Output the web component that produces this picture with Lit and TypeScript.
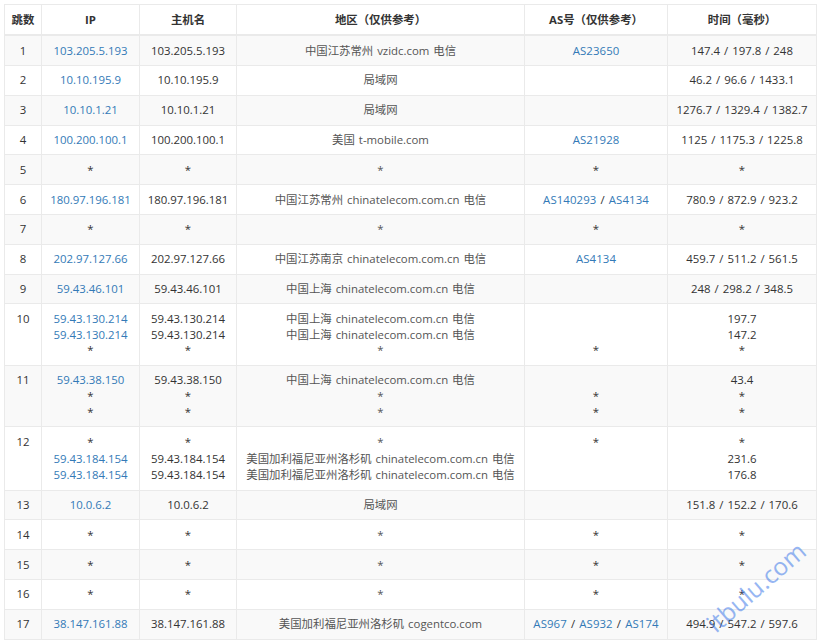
import { LitElement, html, css, nothing } from 'lit';
import { customElement } from 'lit/decorators.js';

// each cell is a list of lines, one hop can have several probes
type Hop = { n: number; ip: string[]; host: string[]; area: string[]; as: string[][]; time: string[]; tall?: boolean };

const one = (n: number, ip: string, area: string, as: string[], time: string): Hop => ({
  n,
  ip: [ip],
  host: [ip],
  area: [area],
  as: [as],
  time: [time],
});

const CT = '中国上海 chinatelecom.com.cn 电信';
const LA = '美国加利福尼亚州洛杉矶 chinatelecom.com.cn 电信';

const hops: Hop[] = [
  one(1, '103.205.5.193', '中国江苏常州 vzidc.com 电信', ['AS23650'], '147.4 / 197.8 / 248'),
  one(2, '10.10.195.9', '局域网', [], '46.2 / 96.6 / 1433.1'),
  one(3, '10.10.1.21', '局域网', [], '1276.7 / 1329.4 / 1382.7'),
  one(4, '100.200.100.1', '美国 t-mobile.com', ['AS21928'], '1125 / 1175.3 / 1225.8'),
  one(5, '*', '*', ['*'], '*'),
  one(6, '180.97.196.181', '中国江苏常州 chinatelecom.com.cn 电信', ['AS140293', 'AS4134'], '780.9 / 872.9 / 923.2'),
  one(7, '*', '*', ['*'], '*'),
  one(8, '202.97.127.66', '中国江苏南京 chinatelecom.com.cn 电信', ['AS4134'], '459.7 / 511.2 / 561.5'),
  one(9, '59.43.46.101', CT, [], '248 / 298.2 / 348.5'),
  {
    n: 10,
    ip: ['59.43.130.214', '59.43.130.214', '*'],
    host: ['59.43.130.214', '59.43.130.214', '*'],
    area: [CT, CT, '*'],
    as: [[], [], ['*']],
    time: ['197.7', '147.2', '*'],
  },
  {
    n: 11,
    ip: ['59.43.38.150', '*', '*'],
    host: ['59.43.38.150', '*', '*'],
    area: [CT, '*', '*'],
    as: [[], ['*'], ['*']],
    time: ['43.4', '*', '*'],
  },
  {
    n: 12,
    ip: ['*', '59.43.184.154', '59.43.184.154'],
    host: ['*', '59.43.184.154', '59.43.184.154'],
    area: ['*', LA, LA],
    as: [['*'], [], []],
    time: ['*', '231.6', '176.8'],
    tall: true,
  },
  one(13, '10.0.6.2', '局域网', [], '151.8 / 152.2 / 170.6'),
  one(14, '*', '*', ['*'], '*'),
  one(15, '*', '*', ['*'], '*'),
  one(16, '*', '*', ['*'], '*'),
  one(17, '38.147.161.88', '美国加利福尼亚州洛杉矶 cogentco.com', ['AS967', 'AS932', 'AS174'], '494.9 / 547.2 / 597.6'),
];

@customElement('app-root')
export class AppRoot extends LitElement {
  static styles = css`
    :host {
      display: block;
      width: 820px;
      height: 644px;
      overflow: hidden;
      position: relative;
      background: #fff;
      font-family: 'Open Sans', 'Noto Sans CJK SC', sans-serif;
      font-size: 11.4px;
      word-spacing: 1px;
      color: #333;
    }
    .wrap {
      padding: 4px 4px 0 4px;
    }
    table {
      width: 812px;
      table-layout: fixed;
      border-collapse: collapse;
      line-height: 15.8px;
    }
    th,
    td {
      border: 1px solid #eaeaea;
      padding: 6.5px 4px;
      text-align: center;
      vertical-align: top;
    }
    th {
      font-weight: 700;
      color: #333;
      border-bottom-width: 2px;
      padding: 6.7px 4px;
    }
    tbody tr:nth-child(odd) {
      background: #f9f9f9;
    }
    .line {
      display: block;
      height: 15.8px;
      white-space: nowrap;
    }
    .tall .line:first-child {
      height: 17.8px;
    }
    .link {
      color: #337ab7;
    }
    .area {
      color: #555;
    }
    .as {
      letter-spacing: 0.1px;
    }
    .mark {
      position: absolute;
      left: 756px;
      top: 587px;
      transform: translate(-50%, -50%) rotate(-41deg);
      font-size: 24.5px;
      line-height: 28px;
      color: #2f6fe8;
      opacity: 0.5;
      white-space: nowrap;
      pointer-events: none;
    }
  `;

  private lines(items: string[], cls = '') {
    return items.map((t) => html`<span class="line ${t === '*' ? '' : cls}">${t}</span>`);
  }

  private asLine(list: string[]) {
    if (!list.length) return html`<span class="line">&nbsp;</span>`;
    return html`<span class="line">
      ${list.map(
        (a, i) => html`${i ? ' / ' : nothing}<span class=${a === '*' ? '' : 'link'}>${a}</span>`,
      )}
    </span>`;
  }

  render() {
    return html`
      <div class="wrap">
        <table>
          <colgroup>
            <col style="width:37px" />
            <col style="width:98px" />
            <col style="width:97px" />
            <col style="width:288px" />
            <col style="width:143px" />
            <col style="width:149px" />
          </colgroup>
          <thead>
            <tr>
              <th>跳数</th>
              <th>IP</th>
              <th>主机名</th>
              <th>地区（仅供参考）</th>
              <th>AS号（仅供参考）</th>
              <th>时间（毫秒）</th>
            </tr>
          </thead>
          <tbody>
            ${hops.map(
              (h) => html`
                <tr class=${h.tall ? 'tall' : ''}>
                  <td>${h.n}</td>
                  <td>${this.lines(h.ip, 'link')}</td>
                  <td>${this.lines(h.host)}</td>
                  <td class="area">${this.lines(h.area)}</td>
                  <td class="as">${h.as.map((a) => this.asLine(a))}</td>
                  <td>${this.lines(h.time)}</td>
                </tr>
              `,
            )}
          </tbody>
        </table>
      </div>
      <div class="mark">itbulu.com</div>
    `;
  }
}
